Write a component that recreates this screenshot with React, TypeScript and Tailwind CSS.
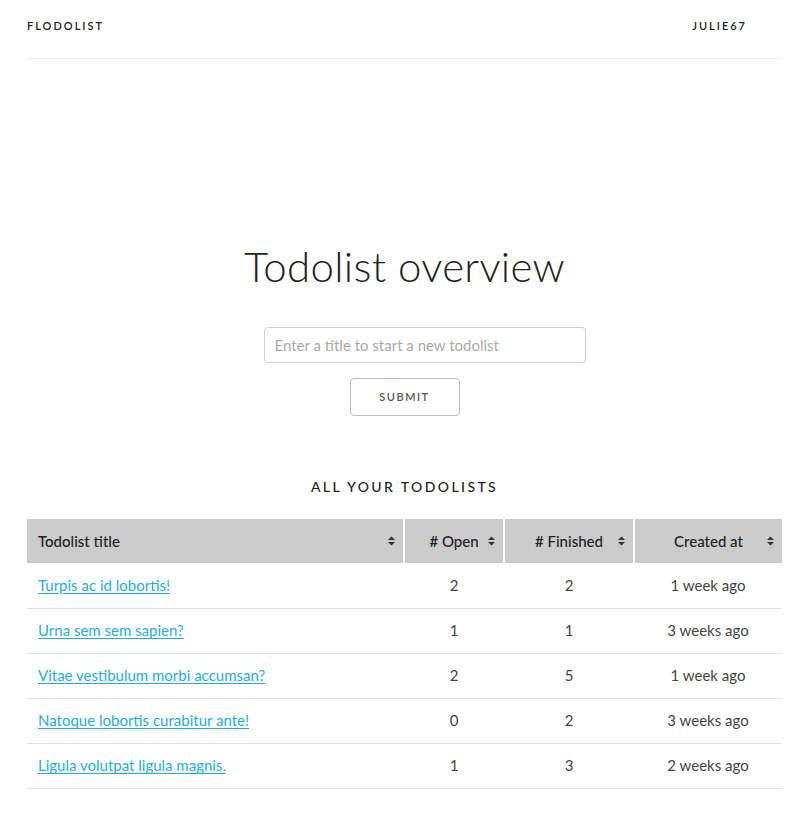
import React from "react";

type Row = { title: string; open: number; finished: number; created: string };

const rows: Row[] = [
  { title: "Turpis ac id lobortis!", open: 2, finished: 2, created: "1 week ago" },
  { title: "Urna sem sem sapien?", open: 1, finished: 1, created: "3 weeks ago" },
  { title: "Vitae vestibulum morbi accumsan?", open: 2, finished: 5, created: "1 week ago" },
  { title: "Natoque lobortis curabitur ante!", open: 0, finished: 2, created: "3 weeks ago" },
  { title: "Ligula volutpat ligula magnis.", open: 1, finished: 3, created: "2 weeks ago" },
];

function SortIcon() {
  return (
    <svg width="7" height="10" viewBox="0 0 7 10" className="absolute right-[8px] top-1/2 -translate-y-1/2">
      <path d="M0 4 L3.5 0.5 L7 4 Z" fill="#333" />
      <path d="M0 6 L3.5 9.5 L7 6 Z" fill="#333" />
    </svg>
  );
}

export default function App() {
  return (
    <div className="min-h-[816px] bg-white text-[#222]" style={{ fontFamily: "Lato, 'Open Sans', sans-serif" }}>
      <div className="ml-[27px] w-[755px]">
        <nav className="flex h-[59px] items-center justify-between border-b border-[#eee] pb-[6px] pr-[35px]">
          <span className="text-[11px] font-semibold tracking-[2px] text-[#222]">FLODOLIST</span>
          <span className="text-[11px] font-semibold tracking-[2px] text-[#222]">JULIE67</span>
        </nav>

        <h1 className="mt-[179px] text-center text-[42px] font-light leading-[56px] tracking-[0.3px] text-[#222]">
          Todolist overview
        </h1>

        <form className="mt-[33px] flex flex-col items-center" onSubmit={(e) => e.preventDefault()}>
          <input
            type="text"
            placeholder="Enter a title to start a new todolist"
            className="ml-[40px] h-[36px] w-[322px] rounded-[4px] border border-[#d1d1d1] px-[10px] text-[15px] text-[#222] outline-none placeholder:text-[#aaa]"
          />
          <button
            type="submit"
            className="mt-[15px] h-[38px] w-[110px] rounded-[4px] border border-[#bbb] text-[11px] font-semibold tracking-[1.5px] text-[#555]"
          >
            SUBMIT
          </button>
        </form>

        <h2 className="mt-[60px] text-center text-[14px] font-medium tracking-[2.4px] text-[#222]">ALL YOUR TODOLISTS</h2>

        <table className="mt-[22px] w-full border-collapse text-[15px]">
          <thead>
            <tr className="h-[44px] bg-[#ccc] text-[#222]">
              <th className="relative w-[377px] border-r-2 border-white pl-[11px] text-left font-medium">
                Todolist title
                <SortIcon />
              </th>
              <th className="relative w-[100px] border-r-2 border-white text-center font-medium">
                # Open
                <SortIcon />
              </th>
              <th className="relative w-[130px] border-r-2 border-white text-center font-medium">
                # Finished
                <SortIcon />
              </th>
              <th className="relative text-center font-medium">
                Created at
                <SortIcon />
              </th>
            </tr>
          </thead>
          <tbody>
            {rows.map((r) => (
              <tr key={r.title} className="h-[45px] border-b border-[#e1e1e1] text-[#444]">
                <td className="pl-[11px]">
                  <a href="#" className="text-[#1eaedb] underline underline-offset-2">
                    {r.title}
                  </a>
                </td>
                <td className="text-center">{r.open}</td>
                <td className="text-center">{r.finished}</td>
                <td className="text-center">{r.created}</td>
              </tr>
            ))}
          </tbody>
        </table>
      </div>
    </div>
  );
}
